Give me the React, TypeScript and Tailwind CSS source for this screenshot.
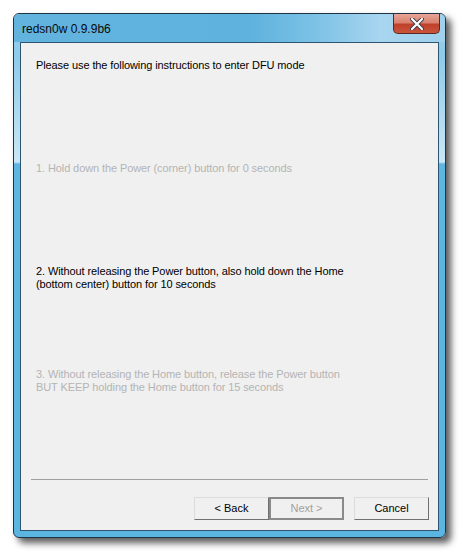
export default function App() {
  const font = { fontFamily: '"Liberation Sans", Arial, sans-serif' };
  return (
    <div className="w-[461px] h-[553px] bg-white pt-[13px] pl-[13px]" style={font}>
      <div className="relative w-[433px] h-[525px] rounded-[6px] border border-[#1e3444] shadow-[5px_5px_7px_rgba(0,0,0,0.65)] bg-[linear-gradient(180deg,#9ed1ec_0px,#8ccbea_40px,#c9e7f6_148px,#5cb6e1_150px,#5ab5e0_100%)] flex flex-col overflow-hidden">
        {/* title bar */}
        <div className="h-[28px] flex items-start bg-[linear-gradient(90deg,#62b4df_0%,#5fb2de_55%,#7cc2e6_70%,#a8d5ef_85%,#9fd0ec_100%)]">
          <span className="mt-[8px] ml-[8px] text-[12px] text-[#0a0a0a] leading-[14px]">redsn0w 0.9.9b6</span>
          <div className="ml-auto mr-[5px] w-[47px] h-[20px] rounded-b-[5px] border border-t-0 border-[#5a2a22] bg-[linear-gradient(180deg,#e8a598_0%,#d9826f_45%,#c0402a_55%,#c9553c_100%)] flex items-center justify-center">
            <svg width="14" height="12" viewBox="0 0 14 12">
              <path d="M2 1 L12 11 M12 1 L2 11" stroke="#3a3a4a" strokeWidth="4" strokeLinecap="round" />
              <path d="M2 1 L12 11 M12 1 L2 11" stroke="#ffffff" strokeWidth="2.2" strokeLinecap="round" />
            </svg>
          </div>
        </div>
        {/* client */}
        <div className="flex-1 mx-[6px] mb-[6px] border border-[#2e5470] bg-[#f0f0f0] flex flex-col">
          <div className="flex-1 flex flex-col pl-[15px] pt-[16px] text-[11px] leading-[13px] tracking-[-0.1px]">
            <div className="text-[#000]">Please use the following instructions to enter DFU mode</div>
            <div className="mt-[90px] text-[#b4b4b4]">1. Hold down the Power (corner) button for 0 seconds</div>
            <div className="mt-[90px] text-[#000]">
              2. Without releasing the Power button, also hold down the Home
              <br />
              (bottom center) button for 10 seconds
            </div>
            <div className="mt-[77px] text-[#b4b4b4]">
              3. Without releasing the Home button, release the Power button
              <br />
              BUT KEEP holding the Home button for 15 seconds
            </div>
          </div>
          <div className="mx-[10px] h-[2px] border-t border-[#a0a0a0] border-b-white" />
          <div className="flex justify-end pr-[9px] pt-[16px] pb-[10px] text-[11px]">
            <button className="w-[75px] h-[23px] border border-t-[#dcdcdc] border-l-[#dcdcdc] border-r-[#707070] border-b-[#707070] bg-[#f0f0f0] text-black">
              &lt; Back
            </button>
            <button className="w-[75px] h-[23px] border-2 border-[#8a8a8a] bg-[#f0f0f0] text-[#a0a0a0]">
              Next &gt;
            </button>
            <button className="ml-[10px] w-[75px] h-[23px] border border-t-[#dcdcdc] border-l-[#dcdcdc] border-r-[#707070] border-b-[#707070] bg-[#f0f0f0] text-black">
              Cancel
            </button>
          </div>
        </div>
      </div>
    </div>
  );
}
